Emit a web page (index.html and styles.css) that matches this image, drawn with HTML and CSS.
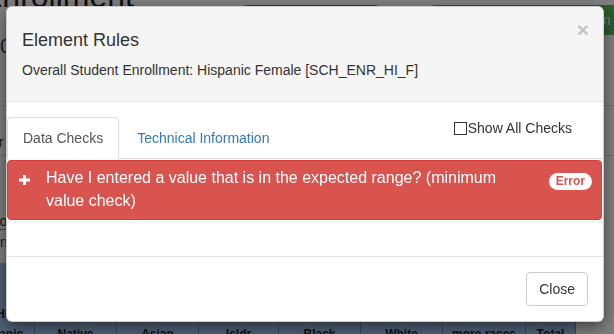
FILE: index.html
```html
<!DOCTYPE html>
<html lang="en">
<head>
    <meta charset="UTF-8">
    <meta name="viewport" content="width=device-width, initial-scale=1.0">
    <title>Element Rules</title>
    <link rel="stylesheet" href="styles.css">
</head>
<body>
    <!-- page behind the dialog -->
    <div class="page">
        <div class="page-head">
            <h1 class="page-title">Enrollment</h1>
            <span class="page-btn red">Discard Changes</span>
            <span class="page-btn green">Saving Form Data</span>
        </div>
        <div class="page-sub">01 - Lincoln High School</div>
        <div class="filter-row">Year</div>
        <div class="notes">
            <div class="note-1"><span class="dotted">Info</span></div>
            <div class="note-2">In process</div>
        </div>
        <table class="grid">
            <thead>
                <tr>
                    <th class="c1">His-<br>panic</th>
                    <th class="c2">Amer. Ind.<br>Native</th>
                    <th class="c3"><br>Asian</th>
                    <th class="c4">Pacific<br>Isldr</th>
                    <th class="c5">African Am.<br>Black</th>
                    <th class="c6"><br>White</th>
                    <th class="c7">Two or<br>more races</th>
                    <th class="c8"><br>Total</th>
                </tr>
            </thead>
        </table>
    </div>

    <div class="backdrop"></div>

    <div class="modal">
        <div class="modal-header">
            <button class="close">&times;</button>
            <h4 class="modal-title">Element Rules</h4>
            <div class="modal-sub">Overall Student Enrollment: Hispanic Female [SCH_ENR_HI_F]</div>
        </div>
        <div class="modal-body">
            <div class="tabs">
                <a class="tab active">Data Checks</a>
                <a class="tab">Technical Information</a>
                <label class="show-all"><input type="checkbox">Show All Checks</label>
            </div>
            <div class="checks">
                <div class="check error">
                    <svg class="plus" width="11" height="10" viewBox="0 0 11 10">
                        <rect x="0" y="3.5" width="11" height="3" fill="#fff"/>
                        <rect x="4" y="0" width="3" height="10" fill="#fff"/>
                    </svg>
                    <span class="check-text">Have I entered a value that is in the expected range? (minimum value check)</span>
                    <span class="badge">Error</span>
                </div>
            </div>
        </div>
        <div class="modal-footer">
            <button class="btn">Close</button>
        </div>
    </div>
</body>
</html>
```

FILE: styles.css
```css
body {
    margin: 0;
    overflow: hidden;
    background-color: #fff;
    font-family: "Liberation Sans", Arial, sans-serif;
    font-size: 14px;
    color: #333;
}

/* Background page */
.page {
    margin-left: -19px;
    width: 700px;
}

.page-head {
    display: flex;
    align-items: flex-start;
    height: 35px;
}

.page-title {
    margin: -20px 0 0 0;
    font-size: 32px;
    line-height: 32px;
    font-weight: normal;
    color: #222;
    width: 262px;
}

.page-btn {
    margin-top: 5px;
    height: 30px;
    line-height: 30px;
    color: #fff;
    border-radius: 4px;
    padding: 0 12px;
    box-sizing: border-box;
}

.page-btn.red {
    background-color: #d9534f;
    width: 136px;
    margin-right: 52px;
}

.page-btn.green {
    background-color: #5cb85c;
    width: 240px;
    padding-left: 100px;
}

.page-sub {
    padding-left: 19px;
    height: 22px;
    font-size: 20px;
    line-height: 22px;
    color: #1f3f66;
    margin-bottom: 48px;
}

.filter-row {
    border-top: 1px solid #ddd;
    border-bottom: 1px solid #ddd;
    height: 23px;
    padding-top: 26px;
    line-height: 20px;
    text-indent: -6px;
}

.notes {
    padding: 55px 0 3px;
    line-height: 21px;
    height: 42px;
}

.note-1 {
    padding-left: 3px;
}

.note-2 {
    padding-left: 15px;
}

.dotted {
    border-bottom: 1px dotted #333;
}

.grid {
    margin-top: 7px;
    border-collapse: collapse;
    table-layout: fixed;
}

.grid th {
    background-color: #9ec3ea;
    border-right: 1px solid #6f8fb3;
    padding: 41px 4px 10px;
    font-size: 12px;
    line-height: 20px;
    font-weight: bold;
    color: #222;
    text-align: center;
    vertical-align: bottom;
    white-space: nowrap;
}

.c1 { width: 45px; }
.c2, .c3, .c5, .c6 { width: 73px; }
.c4 { width: 71px; }
.c7 { width: 74px; }
.c8 { width: 41px; }

.backdrop {
    position: fixed;
    top: 0;
    left: 0;
    right: 0;
    bottom: 0;
    background-color: rgba(0, 0, 0, 0.5);
}

/* Dialog */
.modal {
    position: fixed;
    top: 6px;
    left: 6px;
    width: 596px;
    background-color: #fff;
    border: 1px solid rgba(0, 0, 0, 0.2);
    border-radius: 6px;
    box-shadow: 0 5px 15px rgba(0, 0, 0, 0.5);
}

.modal-header {
    position: relative;
    background-color: #f5f5f5;
    border-bottom: 1px solid #e5e5e5;
    border-radius: 6px 6px 0 0;
    padding: 21px 15px 21px;
}

.close {
    position: absolute;
    top: 12px;
    right: 14px;
    padding: 0;
    border: none;
    background: none;
    font-family: inherit;
    font-size: 21px;
    font-weight: bold;
    line-height: 1;
    color: #000;
    opacity: 0.2;
    cursor: pointer;
}

.modal-title {
    margin: 0 0 7px;
    font-size: 18px;
    font-weight: normal;
    line-height: 25px;
}

.modal-sub {
    line-height: 20px;
}

.modal-body {
    padding: 15px 0 33px;
}

.tabs {
    display: flex;
    align-items: flex-start;
    border-bottom: 1px solid #ddd;
}

.tab {
    padding: 10px 15px;
    margin: 0 2px -1px 0;
    line-height: 20px;
    border: 1px solid transparent;
    border-radius: 4px 4px 0 0;
    color: #337ab7;
    cursor: pointer;
}

.tab.active {
    color: #555;
    background-color: #fff;
    border-color: #ddd #ddd transparent;
}

.show-all {
    display: flex;
    align-items: center;
    margin: 1px 31px 0 auto;
    line-height: 20px;
}

.show-all input {
    appearance: none;
    width: 13px;
    height: 13px;
    margin: 0 1px 0 0;
    border: 1px solid #333;
    background-color: #fff;
}

.checks {
    margin-top: 1px;
    padding: 0 1px 2px 0;
    border-bottom: 1px solid #eee;
}

.check {
    display: flex;
    align-items: flex-start;
    padding: 6px 9px 6px 11px;
    border: 1px solid #d43f3a;
    border-radius: 4px;
    font-size: 16px;
    line-height: 22.8px;
    color: #fff;
}

.error {
    background-color: #d9534f;
}

.plus {
    flex: none;
    margin: 8px 16px 0 0;
}

.check-text {
    flex: 1;
    margin-right: 20px;
}

.badge {
    flex: none;
    margin-top: 6px;
    padding: 3px 7px;
    border-radius: 10px;
    background-color: #fff;
    color: #d9534f;
    font-size: 12px;
    font-weight: bold;
    line-height: 11px;
}

.modal-footer {
    padding: 15px;
    border-top: 1px solid #e5e5e5;
    text-align: right;
}

.btn {
    padding: 6px 12px;
    font-family: inherit;
    font-size: 14px;
    line-height: 20px;
    color: #333;
    background-color: #fff;
    border: 1px solid #ccc;
    border-radius: 4px;
    cursor: pointer;
}
```
